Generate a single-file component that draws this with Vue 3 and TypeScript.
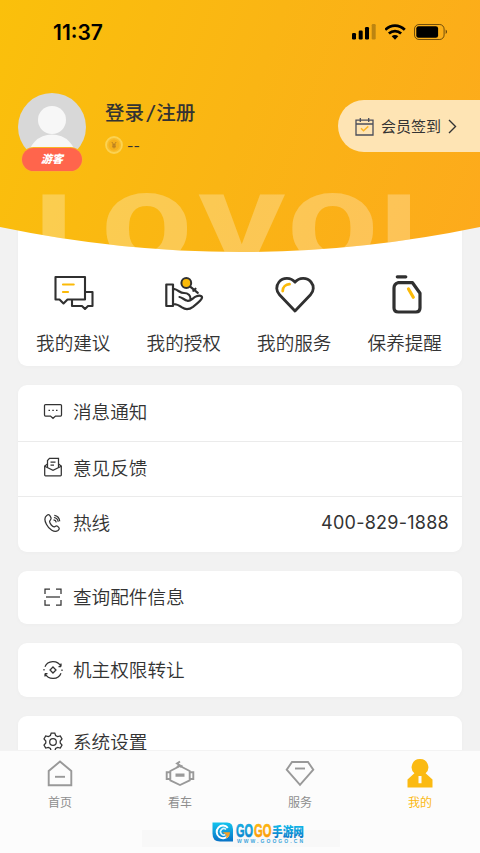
<template>
  <div class="page">
    <main class="content">
      <header class="hero">
        <svg class="wordmark" width="480" height="252" viewBox="0 0 480 252">
          <g fill="#fff" fill-opacity="0.27" transform="scale(1.35 1)">
            <text x="26.3 75.5 147.5 213.3 282" y="263">LOVOL</text>
          </g>
        </svg>

        <!-- Status bar -->
        <div class="status-bar">
          <span class="time">11:37</span>
          <div class="status-icons">
            <svg width="26" height="18" viewBox="0 0 26 18">
              <rect x="0" y="10" width="4" height="6.5" rx="1.2" />
              <rect x="6.7" y="7.5" width="4" height="9" rx="1.2" />
              <rect x="13" y="4" width="4" height="12.5" rx="1.2" />
              <rect x="19.7" y="1" width="4" height="15.5" rx="1.2" opacity="0.25" />
            </svg>
            <svg width="22" height="18" viewBox="0 0 22 18">
              <g fill="none" stroke="#000" stroke-width="2.7">
                <path d="M0.2 6.8C5.8 1.2 14.2 1.2 19.8 6.8" />
                <path d="M3.9 10.6c3.5-3.3 8.7-3.3 12.2 0" />
              </g>
              <path d="M10 16.8L6.7 13.3c1.8-1.7 4.8-1.7 6.6 0z" />
            </svg>
            <svg width="34" height="18" viewBox="0 0 34 18">
              <rect x="0.5" y="1.5" width="29.6" height="15" rx="4.5" fill="none" stroke="#000" stroke-opacity="0.55" />
              <rect x="2.3" y="3.3" width="21.8" height="11.4" rx="2.3" />
              <path d="M31.7 6.5c1.8.7 1.8 3.8 0 4.5z" opacity="0.6" />
            </svg>
          </div>
        </div>

        <!-- User -->
        <div class="user">
          <div class="avatar">
            <svg width="68" height="68" viewBox="0 0 68 68">
              <clipPath id="face"><circle cx="34" cy="34" r="34" /></clipPath>
              <g clip-path="url(#face)">
                <rect width="68" height="68" fill="#d8d8d8" />
                <circle cx="34" cy="27" r="14" fill="#f7f7f7" />
                <circle cx="34" cy="66" r="24.5" fill="#f7f7f7" />
              </g>
            </svg>
            <span class="badge">游客</span>
          </div>
          <div class="user-info">
            <div class="login">登录<i>/</i>注册</div>
            <div class="coins">
              <svg width="18" height="18" viewBox="0 0 18 18">
                <circle cx="9" cy="9" r="8" fill="#f9bd2b" stroke="#fbd252" stroke-width="1.8" />
                <circle cx="9" cy="9" r="5.5" fill="#f5b11c" />
                <path d="M6.8 6L9 8.8 11.2 6M9 8.8V12.4M7 9h4M7 10.8h4" fill="none" stroke="#af7824" stroke-width="0.9" />
              </svg>
              <span>--</span>
            </div>
          </div>
          <div class="sign-in">
            <svg width="19" height="19" viewBox="0 0 19 19" fill="none">
              <path d="M1 3.2h17V18H1zM1 7h17M5.3 1v4M13.7 1v4" stroke="#4b4d5a" stroke-width="1.3" />
              <path d="M6 11.3l2.5 2.5 4.8-4.4" stroke="#fbb526" stroke-width="1.5" />
            </svg>
            <span>会员签到</span>
            <svg width="9" height="15" viewBox="0 0 9 15" fill="none">
              <path d="M1 1l6.5 6.5L1 14" stroke="#333" stroke-width="1.4" />
            </svg>
          </div>
        </div>
      </header>

      <section class="card shortcuts">
        <div v-for="item in shortcuts" :key="item.label" class="shortcut">
          <svg width="44" height="42" viewBox="0 0 44 42">
            <path :d="item.line" class="line" :style="{ strokeWidth: item.weight }" />
            <circle v-if="item.knob" cx="24.3" cy="10" r="4.9" class="knob" />
            <path :d="item.accent" class="accent" :style="{ strokeWidth: item.accentWeight }" />
          </svg>
          <span>{{ item.label }}</span>
        </div>
      </section>

      <section v-for="(group, index) in groups" :key="index" class="card list">
        <div v-for="row in group" :key="row.label" class="list-row">
          <svg width="20" height="20" viewBox="0 0 20 20">
            <path v-for="d in row.icon" :key="d" :d="d" />
          </svg>
          <span class="list-label">{{ row.label }}</span>
          <span v-if="row.value" class="list-value">{{ row.value }}</span>
        </div>
      </section>
    </main>

    <footer class="tab-bar">
      <nav class="tabs">
        <div v-for="tab in tabs" :key="tab.label" class="tab" :class="{ active: tab.label === current }" @click="current = tab.label">
          <svg width="30" height="30" viewBox="0 0 30 30">
            <path v-for="d in tab.icon" :key="d" :d="d" :class="{ solid: tab.solid }" />
          </svg>
          <span>{{ tab.label }}</span>
        </div>
      </nav>
      <div class="brand">
        <svg width="94" height="26" viewBox="0 0 94 26">
          <defs>
            <linearGradient id="blue" x1="0" y1="0" x2="0" y2="1">
              <stop offset="0" stop-color="#13c4ee" />
              <stop offset="1" stop-color="#0872c6" />
            </linearGradient>
            <linearGradient id="orange" x1="0" y1="0" x2="0" y2="1">
              <stop offset="0" stop-color="#ffc80a" />
              <stop offset="1" stop-color="#f88a08" />
            </linearGradient>
          </defs>
          <path d="M.5 1.5H15q6 0 6 7v12H8q-7.5 0-7.5-8z" fill="url(#blue)" />
          <path d="M15.8 6.8A6.3 6.3 0 1 0 16.5 14" fill="none" stroke="#fff" stroke-width="2" />
          <path d="M14 8.5a3.2 3.2 0 1 0-.5 5" fill="none" stroke="#d5f4fc" stroke-width="1.6" />
          <path d="M10.5 11.2H18c0 3-1.5 5.3-4 6.3l.5-3.6z" fill="#f7a025" />
          <text x="24" y="16" textLength="17" lengthAdjust="spacingAndGlyphs" class="go" fill="url(#blue)" stroke="#0d91d2">GO</text>
          <text x="42" y="16" textLength="17.5" lengthAdjust="spacingAndGlyphs" class="go" fill="url(#orange)" stroke="#fba60a">GO</text>
          <text x="60" y="15" textLength="32" lengthAdjust="spacingAndGlyphs" class="site" fill="url(#blue)">手游网</text>
          <text x="25" y="22" textLength="66" class="domain">WWW.GOOGO.CN</text>
        </svg>
      </div>
    </footer>
  </div>
</template>

<script setup lang="ts">
import { ref } from 'vue'

interface Shortcut {
  label: string
  line: string
  weight: number
  accent: string
  accentWeight: number
  knob?: boolean
}

interface Row {
  label: string
  icon: string[]
  value?: string
}

interface Tab {
  label: string
  icon: string[]
  solid?: boolean
}

const current = ref('我的')

const shortcuts: Shortcut[] = [
  {
    label: '我的建议',
    line: 'M4.5 4H34V26.5H16.5L12.5 30.5L8.5 26.5H4.5ZM35 19H41.5V33H37L34 36L31 33H21V27',
    weight: 2.1,
    accent: 'M12 11.5H22.7M12 19H17',
    accentWeight: 2.2
  },
  {
    label: '我的授权',
    line: 'M4.3 11.5H11V33H4.3ZM11.5 15.8C17 17 17.5 20 22 20C26 20 29 22.5 28.5 26.3M17.5 24C20.5 24.5 22 27 25.5 27.8C29 28.4 30.5 24.8 34.5 23.3C37.5 22 40.3 23 40 24.8C39.5 27.5 34.8 30.8 31 33.8C27 36.8 23.5 36.8 20 34.4C17 32.2 15 31 11.5 31M28.5 13.8L35.8 19.8M31.3 17.8L33.5 15.7',
    weight: 2.2,
    accent: '',
    accentWeight: 2,
    knob: true
  },
  {
    label: '我的服务',
    line: 'M23 9.2C19 4.2 11 4 7 9C3.7 13 4.1 18.2 7.5 21.8L23 38L38.5 21.8C41.9 18.2 42.3 13 39 9C35 4 27 4.2 23 9.2Z',
    weight: 2.8,
    accent: 'M10.7 18C10.7 14 13.7 11.4 17.5 11.2',
    accentWeight: 2.8
  },
  {
    label: '保养提醒',
    line: 'M14.3 3.8H22.8M15 9.7H29.5L37 20.2V35Q37 39 33 39H15.5Q11 39 11 35V15Q11 11 15 9.7Z',
    weight: 3.2,
    accent: 'M25.5 16L30.3 24.2',
    accentWeight: 3.2
  }
]

const groups: Row[][] = [
  [
    {
      label: '消息通知',
      icon: ['M2.5 3.5H17.5Q18.5 3.5 18.5 4.5V14Q18.5 15 17.5 15H12.5L10 17.3L7.5 15H2.5Q1.5 15 1.5 14V4.5Q1.5 3.5 2.5 3.5Z', 'M5.5 9.3H7M9.3 9.3H10.8M13 9.3H14.5']
    },
    {
      label: '意见反馈',
      icon: ['M4.5 7L1.7 9V18Q1.7 18.8 2.5 18.8H17.5Q18.3 18.8 18.3 18V9L15.5 7', 'M1.7 9.3L10 13.2L18.3 9.3', 'M4.5 10.5V3.5L6.5 1.3H15.5V10.5', 'M7.5 5H12.5M7.5 8H11']
    },
    {
      label: '热线',
      icon: ['M4 2.2C6 .8 7 2 8 4.8C8.6 6.7 6.6 7.2 6.6 8.6C6.6 10.5 9.5 14 11.3 13.8C12.8 13.5 13 12.3 14.5 13.3C17 15 16.5 16.2 15 17.5C11.5 20.2 5.8 16.2 3.4 11.3C1.4 7.4 1.6 3.8 4 2.2Z', 'M10.5 6.8Q12.8 7 13.3 9.3M10.9 4.5Q14.8 5 15.2 8.8M11.3 2.3Q16.3 3 16.7 8.3'],
      value: '400-829-1888'
    }
  ],
  [
    {
      label: '查询配件信息',
      icon: ['M2 7V2H7M13 2H18V7M18 13V18H13M7 18H2V13', 'M3 10H17']
    }
  ],
  [
    {
      label: '机主权限转让',
      icon: ['M2 6.8C4.5.2 14.5-.5 18 6.5V3.5M18 6.5H15.5', 'M18 13.2C15.5 19.8 5.5 20.5 2 13.5V16.5M2 13.5H4.5', 'M1 10.5V9M19 9.5V11', 'M10 7L13 10L10 13L7 10Z']
    }
  ],
  [
    {
      label: '系统设置',
      icon: ['M8.2 1H11.8L12.6 3.5L14.6 4.6L17.3 4L19 7L17.2 9V11L19 13L17.3 16L14.6 15.4L12.6 16.5L11.8 19H8.2L7.4 16.5L5.4 15.4L2.7 16L1 13L2.8 11V9L1 7L2.7 4L5.4 4.6L7.4 3.5Z', 'M10 6.7A3.3 3.3 0 1 1 10 13.3A3.3 3.3 0 1 1 10 6.7Z']
    }
  ]
]

const tabs: Tab[] = [
  { label: '首页', icon: ['M15 2.5L26.3 12V26.2H3.7V12Z', 'M10 17.8H20'] },
  { label: '看车', icon: ['M15 7L24.7 12V21.3L15 26L5.3 21.3V12Z', 'M5 13.2H1.7V20H5M25 13.2H28.3V20H25', 'M10.5 15.5H19.5M10.5 16.7H19.5', 'M12 8L14.5 6L12 4.5L15 2.5M15 8L17.5 6.5'] },
  { label: '服务', icon: ['M7 3H23L28.3 10.7L15 25.8L1.7 10.7Z', 'M10 9.5H20'] },
  { label: '我的', solid: true, icon: ['M15 0A8.2 8.2 0 0 1 20.6 14.3L27.5 20.6V28.6H2.5V20.6L9.4 14.3A8.2 8.2 0 0 1 15 0ZM13.5 17V24.3H16.5V17Z'] }
]
</script>

<style>
body {
  margin: 0;
}
</style>

<style scoped>
.page {
  display: flex;
  flex-direction: column;
  width: 480px;
  height: 853px;
  overflow: hidden;
  background: #f2f2f2;
  color: #333;
  font-family: Inter, 'Noto Sans CJK SC', sans-serif;
}

.content {
  flex: 1;
  min-height: 0;
  overflow: hidden;
}

.hero {
  position: relative;
  z-index: 1;
  height: 252px;
  background: linear-gradient(110deg, #fac00b 0%, #fab514 50%, #fdaa1c 100%);
  clip-path: path('M0 0H480V227Q240 277 0 227Z');
}

.wordmark {
  position: absolute;
  top: 0;
  left: 0;
  font-family: Roboto, sans-serif;
  font-weight: 900;
  font-size: 96px;
}

.status-bar {
  display: flex;
  justify-content: space-between;
  align-items: center;
  height: 64px;
  padding: 0 32px 0 53px;
}

.time {
  color: #000;
  font-size: 21px;
  font-weight: 600;
}

.status-icons {
  display: flex;
  align-items: center;
  gap: 7px;
}

.user {
  display: flex;
  align-items: flex-start;
  padding: 28px 0 0 18px;
}

.avatar {
  position: relative;
  width: 68px;
  height: 80px;
  padding-top: 1px;
}

.badge {
  position: absolute;
  top: 56px;
  left: 4px;
  width: 60px;
  height: 23px;
  border-radius: 12px;
  background: #ff654c;
  box-shadow: 0 0 0 1px #fbb424;
  color: #fff;
  font-size: 11px;
  font-weight: 800;
  font-style: italic;
  line-height: 23px;
  text-align: center;
}

.user-info {
  flex: 1;
  padding: 8px 0 0 19px;
}

.login {
  font-size: 19.5px;
  font-weight: 500;
  line-height: 26px;
}

.login i {
  margin: 0 2px 0 3px;
}

.coins {
  display: flex;
  align-items: center;
  gap: 4px;
  margin-top: 10px;
  font-size: 14px;
}

.sign-in {
  display: flex;
  align-items: center;
  box-sizing: border-box;
  width: 142px;
  height: 52px;
  margin-top: 8px;
  padding-left: 17px;
  border-radius: 26px 0 0 26px;
  background: #fee4b4;
  font-size: 15px;
}

.sign-in span {
  margin: -2px 7px 0 7px;
}

.card {
  margin: 0 18px 19px;
  border-radius: 9px;
  background: #fff;
  box-shadow: 0 1px 5px rgba(0, 0, 0, 0.025);
}

.shortcuts {
  display: flex;
  box-sizing: border-box;
  height: 145.5px;
  margin-top: -32px;
  margin-bottom: 19.5px;
  padding-right: 2px;
}

.shortcut {
  display: flex;
  flex: 1;
  flex-direction: column;
  align-items: center;
  padding-top: 53px;
  font-size: 18.6px;
  font-weight: 350;
  line-height: 28px;
}

.shortcut span {
  margin-top: 14px;
}

.line {
  fill: none;
  stroke: #303030;
  stroke-linejoin: round;
  stroke-linecap: round;
}

.knob {
  fill: #fbba08;
  stroke: #303030;
  stroke-width: 2;
}

.accent {
  fill: none;
  stroke: #fbba08;
  stroke-linecap: round;
}

.list-row {
  display: flex;
  align-items: center;
  box-sizing: border-box;
  height: 53.5px;
  padding: 0 13px 0 25px;
  font-size: 18.6px;
  font-weight: 350;
}

.list-row:not(:only-child) {
  height: 55.5px;
}

.list-row + .list-row {
  border-top: 1px solid #ebebeb;
}

.list-row:not(:only-child) svg {
  margin-top: -3px;
}

.list-row svg {
  fill: none;
  stroke: #333;
  stroke-width: 1.25;
}

.list-label {
  margin: -3px 0 0 10px;
}

.list-row:not(:only-child) .list-label {
  margin-top: -5px;
}

.list-value {
  margin: -3px 0 0 auto;
  font-size: 18px;
  font-weight: 400;
  letter-spacing: 0.25px;
}

.tab-bar {
  display: flex;
  flex-direction: column;
  box-sizing: border-box;
  height: 103px;
  border-top: 1px solid #f3f3f3;
  background: #fcfcfc;
}

.tabs {
  display: flex;
  height: 70px;
}

.tab {
  display: flex;
  flex: 1;
  flex-direction: column;
  align-items: center;
  padding-top: 8px;
  color: #8e8e8e;
  font-size: 12px;
  line-height: 18px;
}

.tab span {
  margin-top: 5px;
}

.tab path {
  fill: none;
  stroke: #999;
  stroke-width: 1.9;
}

.tab path.solid {
  fill: #fbba12;
  fill-rule: evenodd;
  stroke: none;
}

.tab.active {
  color: #fbb912;
}

.brand {
  width: 198px;
  height: 26px;
  margin-left: 142px;
  padding-left: 70px;
  box-sizing: border-box;
  background: linear-gradient(#fcfcfc 9px, #f8f8f8 9px);
}

.brand svg {
  display: block;
}

.go {
  font-family: 'Liberation Sans', sans-serif;
  font-size: 18px;
  font-weight: 700;
  stroke-width: 0.6;
}

.site {
  font-size: 13px;
  font-weight: 900;
}

.domain {
  fill: #3ba6dc;
  font-family: 'Liberation Sans', sans-serif;
  font-size: 5px;
  font-weight: 700;
}
</style>
